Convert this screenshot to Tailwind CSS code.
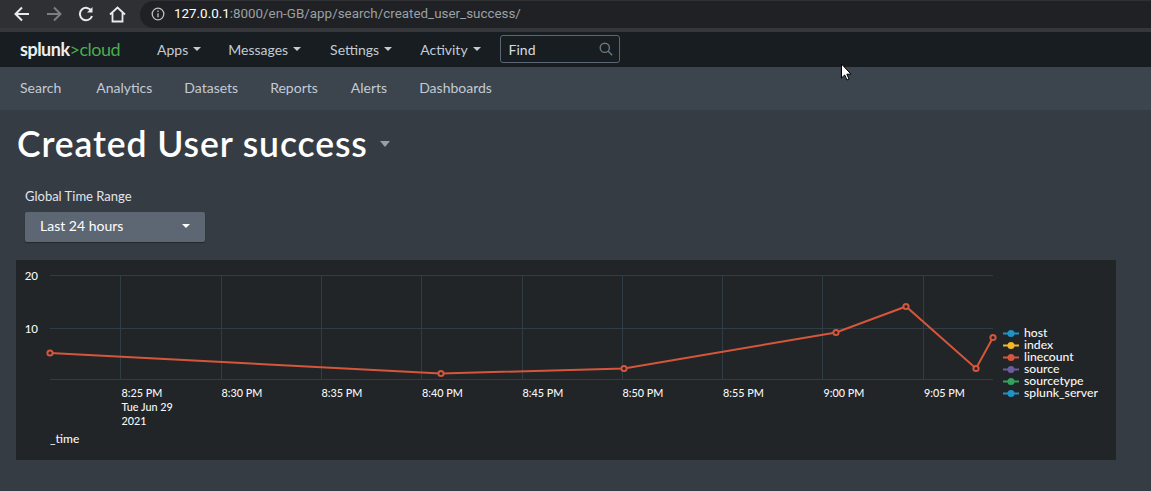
<!DOCTYPE html>
<html lang="en">
<head>
	<meta charset="UTF-8">
	<title>Created User success</title>
	<script src="https://cdn.jsdelivr.net/npm/@tailwindcss/browser@4"></script>
</head>
<body class="relative h-[491px] w-[1151px] overflow-hidden bg-[#363c44] font-['Lato',sans-serif]">

	<!-- browser toolbar -->
	<div class="flex h-[28px] items-center bg-[#2e3033] pl-[14px]">
		<svg class="h-[16px] w-[16px]" viewBox="0 0 16 16" fill="none" stroke="#e8eaed" stroke-width="2"><path d="M15 8H2M8 1.500 1.500 8 8 14.500"/></svg>
		<svg class="ml-[16px] h-[16px] w-[16px]" viewBox="0 0 16 16" fill="none" stroke="#7c7e81" stroke-width="2"><path d="M1 8h13M8 1.500 14.500 8 8 14.500"/></svg>
		<svg class="ml-[16px] h-[16px] w-[16px]" viewBox="0 0 16 16" fill="none" stroke="#e8eaed" stroke-width="2"><path d="M13.500 5A6.200 6.200 0 1 0 14 10"/><path d="M14.500 1v5.500H9" fill="#e8eaed" stroke="none"/></svg>
		<svg class="ml-[15px] h-[17px] w-[17px]" viewBox="0 0 17 17" fill="none" stroke="#e8eaed" stroke-width="1.800"><path d="M1 8.500 8.500 1.500 16 8.500M3.500 7v8.500h10V7"/></svg>
		<div class="ml-[14px] flex h-[27px] flex-1 items-center rounded-l-[14px] bg-[#202124] pl-[11px] font-['Roboto',sans-serif] text-[13.4px]">
			<svg class="h-[14px] w-[14px]" viewBox="0 0 14 14" fill="none" stroke="#bdc1c6" stroke-width="1.300"><circle cx="7" cy="7" r="5.800"/><path d="M7 6.200v4M7 3.600v1.500"/></svg>
			<span class="ml-[9px] text-white">127.0.0.1</span><span class="text-[#9aa0a6]">:8000/en-GB/app/search/created_user_success/</span>
		</div>
	</div>
	<div class="h-[4px] bg-[#35373a]"></div>

	<!-- splunk bar -->
	<nav class="flex h-[35px] items-center bg-[#171d21] pb-[1px] pl-[20px] text-[14px] text-[#c3cbd4]">
		<div class="w-[137px] text-[18px] font-bold leading-none tracking-[-0.5px] text-[#eceef0]">splunk<span class="font-normal text-[#4cab50]">&gt;cloud</span></div>
		<div class="flex items-center gap-[5px]">Apps <span class="h-0 w-0 border-x-[4px] border-t-[4px] border-x-transparent border-t-[#c3cbd4]"></span></div>
		<div class="ml-[27px] flex items-center gap-[5px]">Messages <span class="h-0 w-0 border-x-[4px] border-t-[4px] border-x-transparent border-t-[#c3cbd4]"></span></div>
		<div class="ml-[29px] flex items-center gap-[5px]">Settings <span class="h-0 w-0 border-x-[4px] border-t-[4px] border-x-transparent border-t-[#c3cbd4]"></span></div>
		<div class="ml-[28px] flex items-center gap-[5px]">Activity <span class="h-0 w-0 border-x-[4px] border-t-[4px] border-x-transparent border-t-[#c3cbd4]"></span></div>
		<div class="ml-[19px] flex h-[28px] w-[120px] items-center justify-between rounded-[3px] border border-[#5c6773] pl-[8px] pr-[6px] text-[#d5dbe1]">
			Find
			<svg class="h-[14px] w-[14px]" viewBox="0 0 14 14" fill="none" stroke="#6b7785" stroke-width="1.400"><circle cx="5.800" cy="5.800" r="4.600"/><path d="m9.200 9.200 4 4"/></svg>
		</div>
	</nav>

	<!-- app bar -->
	<div class="flex h-[43px] items-center gap-[33px] bg-[#3c444d] pb-[2px] pl-[20px] text-[14px] text-[#c3cbd4]">
		<span class="mr-[2px]">Search</span>
		<span>Analytics</span>
		<span class="-ml-[1px]">Datasets</span>
		<span class="-ml-[1px]">Reports</span>
		<span>Alerts</span>
		<span class="-ml-[1px]">Dashboards</span>
	</div>

	<!-- dashboard -->
	<main class="px-[16px]">
		<div class="flex items-center pl-[1px] pt-[14px]">
			<h1 class="text-[35.500px] font-semibold leading-[40px] tracking-[0.9px] text-white">Created User success</h1>
			<span class="ml-[12px] h-0 w-0 border-x-[5.500px] border-t-[6px] border-x-transparent border-t-[#9a9fa5]"></span>
		</div>
		<label class="mt-[24px] block pl-[9px] text-[13px] leading-[16px] text-[#e1e6eb]">Global Time Range</label>
		<div class="ml-[9px] mt-[8px] flex h-[30px] w-[180px] items-center justify-between rounded-[2px] bg-[#5c6773] pb-[3px] pl-[15px] pr-[15px] text-[14px] text-white shadow-[0_1px_1px_#23272b]">
			Last 24 hours
			<span class="h-0 w-0 border-x-[4px] border-t-[4px] border-x-transparent border-t-white"></span>
		</div>

		<!-- chart panel -->
		<div class="mt-[18px] h-[200px] w-[1100px] bg-[#212527]">
			<svg class="block h-[200px] w-[1100px] font-['Lato',sans-serif] font-medium" viewBox="16 260 1100 200" font-size="10.800" fill="#f6f7f8">
				<g stroke="#313d45" stroke-width="1">
					<path d="M50 275.500H993M50 328.500H993M50 379.500H993"/>
					<path d="M120.500 275V379M221.500 275V379M321.500 275V379M421.500 275V379M522.500 275V379M622.500 275V379M722.500 275V379M822.500 275V379M923.500 275V379"/>
				</g>
				<text x="38" y="280" text-anchor="end" font-size="11.500">20</text>
				<text x="38" y="333" text-anchor="end" font-size="11.500">10</text>
				<text x="121.500" y="397">8:25 PM</text>
				<text x="121.500" y="411">Tue Jun 29</text>
				<text x="121.500" y="425">2021</text>
				<text x="221.500" y="397">8:30 PM</text>
				<text x="321.500" y="397">8:35 PM</text>
				<text x="422" y="397">8:40 PM</text>
				<text x="522.500" y="397">8:45 PM</text>
				<text x="622.500" y="397">8:50 PM</text>
				<text x="723" y="397">8:55 PM</text>
				<text x="823.500" y="397">9:00 PM</text>
				<text x="924" y="397">9:05 PM</text>
				<text x="50" y="443" font-size="12">_time</text>
				<polyline points="50,353 441,373.500 624,368.500 836,332.500 906,306.500 976,368.500 993,337.500" fill="none" stroke="#d6563c" stroke-width="2"/>
				<g fill="#212527" stroke="#d6563c" stroke-width="2">
					<circle cx="50" cy="353" r="2.600"/>
					<circle cx="441" cy="373.500" r="2.600"/>
					<circle cx="624" cy="368.500" r="2.600"/>
					<circle cx="836" cy="332.500" r="2.600"/>
					<circle cx="906" cy="306.500" r="2.600"/>
					<circle cx="976" cy="368.500" r="2.600"/>
					<circle cx="993" cy="337.500" r="2.600"/>
				</g>
				<g stroke-width="2">
					<path d="M1003 333.500H1019" stroke="#1e93c6"/><circle cx="1011" cy="333.500" r="3.500" fill="#1e93c6"/>
					<path d="M1003 345.500H1019" stroke="#f2b827"/><circle cx="1011" cy="345.500" r="3.500" fill="#f2b827"/>
					<path d="M1003 357.500H1019" stroke="#d6563c"/><circle cx="1011" cy="357.500" r="3.500" fill="#d6563c"/>
					<path d="M1003 369.500H1019" stroke="#6a5c9e"/><circle cx="1011" cy="369.500" r="3.500" fill="#6a5c9e"/>
					<path d="M1003 381.500H1019" stroke="#31a35f"/><circle cx="1011" cy="381.500" r="3.500" fill="#31a35f"/>
					<path d="M1003 393.500H1019" stroke="#1e93c6"/><circle cx="1011" cy="393.500" r="3.500" fill="#1e93c6"/>
				</g>
				<g font-size="12.200">
					<text x="1024" y="337">host</text>
					<text x="1024" y="349">index</text>
					<text x="1024" y="361">linecount</text>
					<text x="1024" y="373">source</text>
					<text x="1024" y="385">sourcetype</text>
					<text x="1024" y="397">splunk_server</text>
				</g>
			</svg>
		</div>
	</main>

	<!-- mouse pointer -->
	<svg class="absolute left-[840px] top-[63px] h-[19px] w-[13px]" viewBox="0 0 13 19"><path d="M1.500 1v14l3.200-3 2.300 5 2-1-2.200-4.800H11z" fill="#fff" stroke="#000"/></svg>
</body>
</html>
